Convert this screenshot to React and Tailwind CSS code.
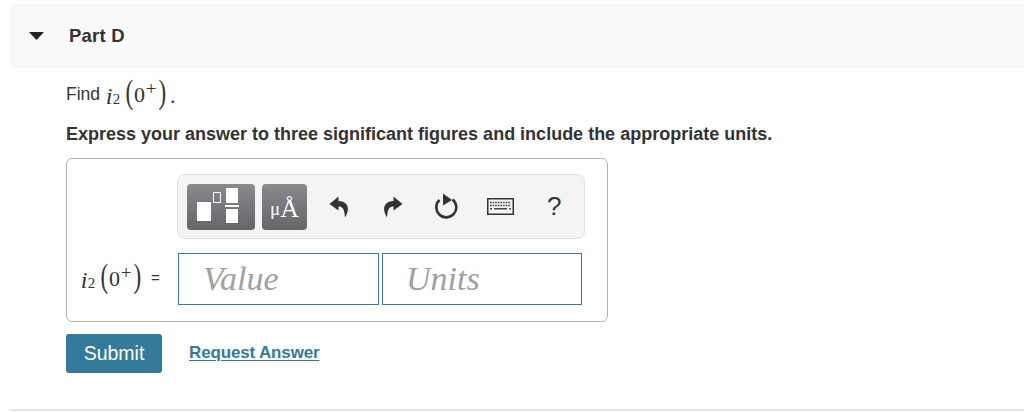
function Math() {
  return (
    <span className="inline-flex items-center font-['Liberation_Serif',serif] text-[#333] text-[22px] leading-none">
      <span className="italic w-[6px] text-[24px] relative top-[1px] flex justify-center">i</span>
      <span className="text-[15px] relative top-[5px] w-[9px] text-center">2</span>
      <span className="text-[33px] font-light leading-none scale-x-[0.7] relative top-[-2px] w-[10px] ml-[3px] text-center">(</span>
      <span className="w-[11px] text-center">0</span>
      <span className="text-[19px] relative top-[-6px] w-[12px] text-center">+</span>
      <span className="text-[33px] font-light leading-none scale-x-[0.7] relative top-[-2px] w-[10px] text-center">)</span>
    </span>
  );
}

function Undo({ flip }) {
  return (
    <svg width="20" height="22" viewBox="0 0 20 22" className={flip ? "-scale-x-100" : ""}>
      <path d="M9.5 0.5 L0.5 8 L9.5 14.5 V10.5 C13.5 10.5 15.5 13 16 21.5 C21 14 20 5.5 9.5 5 Z" fill="#333" />
    </svg>
  );
}

export default function App() {
  return (
    <div className="w-[1024px] h-[412px] overflow-hidden bg-white pt-[4px] pl-[10px] font-['Liberation_Sans',Arial,sans-serif] text-[#333]">
      <div className="h-[64px] bg-[#f9f9f9] flex items-center">
        <svg width="16" height="8" viewBox="0 0 16 8" className="ml-[19px] mt-[-1px]">
          <path d="M0 0 H15 L7.5 8 Z" fill="#222" />
        </svg>
        <span className="ml-[24px] text-[18.5px] tracking-[0.2px] font-bold text-[#333]">Part D</span>
      </div>

      <div className="pl-[56px]">
        <div className="h-[52px] flex items-center text-[17.5px] pt-[1px]">
          <span className="mr-[6px]">Find</span>
          <Math />
          <span className="font-['Liberation_Serif',serif] text-[22px] ml-[3px] relative top-[1px]">.</span>
        </div>
        <p className="text-[18px] font-bold leading-[20px] mt-[4px]">
          Express your answer to three significant figures and include the appropriate units.
        </p>

        <div className="mt-[14px] w-[542px] h-[164px] border border-[#b5b5b5] rounded-[6px] pt-[15px] pl-[110px] pr-[23px]">
          <div className="h-[65px] w-[408px] bg-[#f4f4f4] border border-[#e2e2e2] rounded-[8px] flex items-center pl-[9px]">
            <div className="w-[68px] h-[46px] rounded-[4px] bg-gradient-to-b from-[#8a898e] to-[#66656a] relative">
              <span className="absolute left-[10px] top-[18px] w-[14px] h-[19px] bg-white" />
              <span className="absolute left-[26px] top-[8px] w-[8px] h-[11px] border border-white" />
              <span className="absolute left-[39px] top-[4px] w-[12px] h-[15px] bg-white" />
              <span className="absolute left-[38px] top-[21px] w-[14px] h-[2px] bg-white" />
              <span className="absolute left-[39px] top-[25px] w-[12px] h-[14px] bg-white" />
            </div>
            <div className="ml-[7px] w-[45px] h-[46px] rounded-[4px] bg-gradient-to-b from-[#8a898e] to-[#66656a] flex items-end justify-center pb-[9px] font-['Liberation_Serif',serif] text-white leading-[24px]">
              <span className="text-[19px]">μ</span>
              <span className="text-[26px]">Å</span>
            </div>
            <span className="ml-[22px] flex"><Undo /></span>
            <span className="ml-[34px] flex"><Undo flip /></span>
            <svg width="25" height="27" viewBox="0 0 25 27" className="ml-[32px]">
              <path d="M4.5 7 A10 10 0 1 0 17.5 6.5" fill="none" stroke="#333" strokeWidth="2.6" />
              <path d="M8 0.5 L17 7 L8 12.5 Z" fill="#333" />
            </svg>
            <svg width="27" height="17" viewBox="0 0 27 17" className="ml-[27px]">
              <rect x="0.75" y="0.75" width="25.5" height="15.5" fill="#f4f4f4" stroke="#333" strokeWidth="1.5" />
              <path d="M3 4.5 H24 M3 7.5 H24" stroke="#444" strokeWidth="1.4" strokeDasharray="1.6 1" />
              <path d="M3 10.8 H5 M7 10.8 H20 M22 10.8 H24" stroke="#444" strokeWidth="1.4" />
            </svg>
            <span className="ml-[33px] text-[26px] leading-none text-[#333] relative top-[-1px]">?</span>
          </div>

          <div className="flex items-center mt-[13px] ml-[-97px]">
            <div className="w-[98px] flex items-center h-[53px]">
              <span className="ml-[1px] w-[62px] shrink-0 flex"><Math /></span>
              <span className="ml-[8px] text-[15px]">=</span>
            </div>
            <div className="w-[201px] h-[52px] mt-[1px] pb-[2px] border border-[#3a7a9b] flex items-center pl-[24px] font-['Liberation_Serif',serif] italic text-[34px] text-[#a0a0a0]">
              Value
            </div>
            <div className="ml-[3px] w-[200px] h-[52px] mt-[1px] pb-[2px] border border-[#3a7a9b] flex items-center pl-[23px] font-['Liberation_Serif',serif] italic text-[34px] text-[#a0a0a0]">
              Units
            </div>
          </div>
        </div>

        <div className="flex items-center mt-[12px]">
          <div className="w-[96px] h-[39px] bg-[#347a9b] rounded-[3px] text-white text-[19.5px] flex items-center justify-center">
            Submit
          </div>
          <span className="ml-[27px] text-[#347a9b] text-[17px] tracking-[-0.15px] font-bold underline underline-offset-2 relative top-[-1px]">
            Request Answer
          </span>
        </div>
      </div>

      <div className="mt-[36px] h-[2px] bg-[#e5e5e5]" />
    </div>
  );
}
